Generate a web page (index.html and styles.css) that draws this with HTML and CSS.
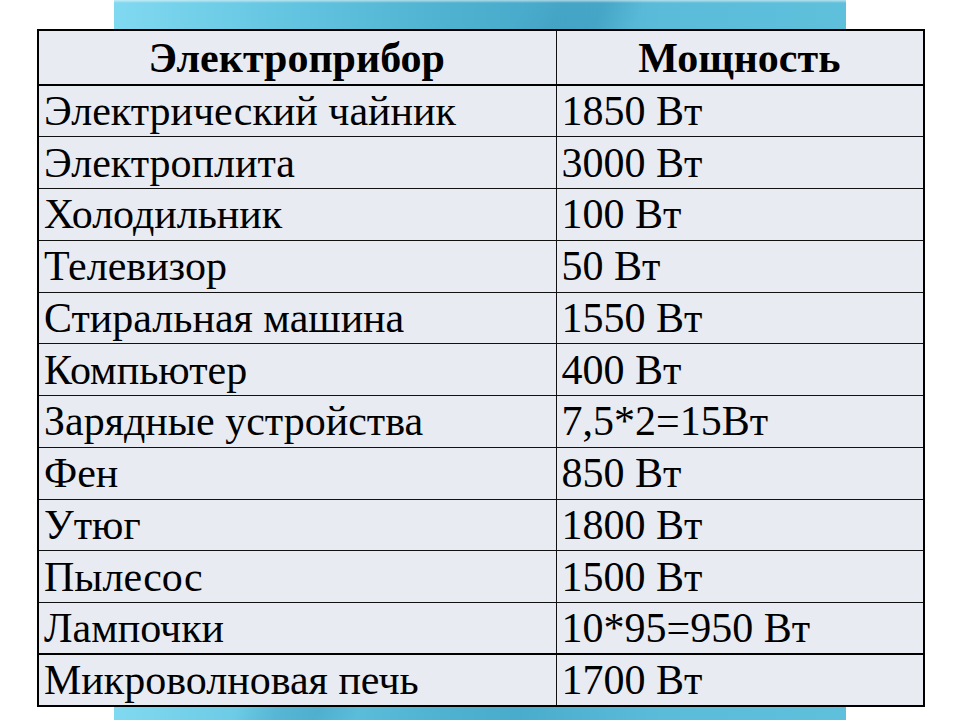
FILE: index.html
```html
<!DOCTYPE html>
<html lang="ru">
<head>
<meta charset="utf-8">
<title>Мощность электроприборов</title>
<link rel="stylesheet" href="styles.css">
</head>
<body>
<div class="slide">
  <table class="power">
    <colgroup><col class="c1"><col class="c2"></colgroup>
    <thead>
      <tr><th>Электроприбор</th><th>Мощность</th></tr>
    </thead>
    <tbody>
      <tr><td>Электрический чайник</td><td>1850 Вт</td></tr>
      <tr><td>Электроплита</td><td>3000 Вт</td></tr>
      <tr><td>Холодильник</td><td>100 Вт</td></tr>
      <tr><td>Телевизор</td><td>50 Вт</td></tr>
      <tr><td>Стиральная машина</td><td>1550 Вт</td></tr>
      <tr><td>Компьютер</td><td>400 Вт</td></tr>
      <tr><td>Зарядные устройства</td><td>7,5*2=15Вт</td></tr>
      <tr><td>Фен</td><td>850 Вт</td></tr>
      <tr><td>Утюг</td><td>1800 Вт</td></tr>
      <tr><td>Пылесос</td><td>1500 Вт</td></tr>
      <tr class="thick"><td>Лампочки</td><td>10*95=950 Вт</td></tr>
      <tr><td>Микроволновая печь</td><td>1700 Вт</td></tr>
    </tbody>
  </table>
</div>
</body>
</html>
```
FILE: styles.css
```css
html, body {
  margin: 0;
  padding: 0;
  background: #ffffff;
}
.slide {
  width: 960px;
  height: 720px;
  box-sizing: border-box;
  padding: 29px 37px 0 37px;
  background-color: #ffffff;
  background-image:
    linear-gradient(180deg, rgba(255,255,255,0.55) 0px, rgba(255,255,255,0) 3px, rgba(255,255,255,0) 100%),
    linear-gradient(112deg, rgba(0,0,0,0) 0%, rgba(0,0,0,0) 40%, rgba(20,110,150,0.18) 44%, rgba(20,110,150,0.22) 48%, rgba(0,0,0,0) 52%, rgba(0,0,0,0) 100%),
    linear-gradient(90deg, #80d9f0 0%, #62c4e0 25%, #4fb2d0 45%, #4aaccc 55%, #5bbcda 75%, #5fc0dc 100%);
  background-size: 732px 100%, 732px 100%, 732px 100%;
  background-position: 114px 0, 114px 0, 114px 0;
  background-repeat: no-repeat;
}
.power {
  width: 886px;
  border-collapse: collapse;
  border: 2px solid #000;
  background: #e8ebf1;
  font-family: "Liberation Serif", "Times New Roman", serif;
  color: #000;
  table-layout: fixed;
}
.power .c1 { width: 518px; }
.power .c2 { width: 368px; }
.power th, .power td {
  border: 1px solid #111;
  padding: 0 6px 0 5px;
  white-space: nowrap;
  overflow: hidden;
  font-size: 42px;
  line-height: 1;
  vertical-align: middle;
}
.power thead tr { height: 55px; }
.power tbody tr { height: 51.75px; }
.power th {
  font-weight: bold;
  text-align: center;
  border-bottom: 2px solid #000;
}
.power td {
  font-weight: normal;
  text-align: left;
}
.power tr.thick td {
  border-bottom: 2px solid #000;
}
```
